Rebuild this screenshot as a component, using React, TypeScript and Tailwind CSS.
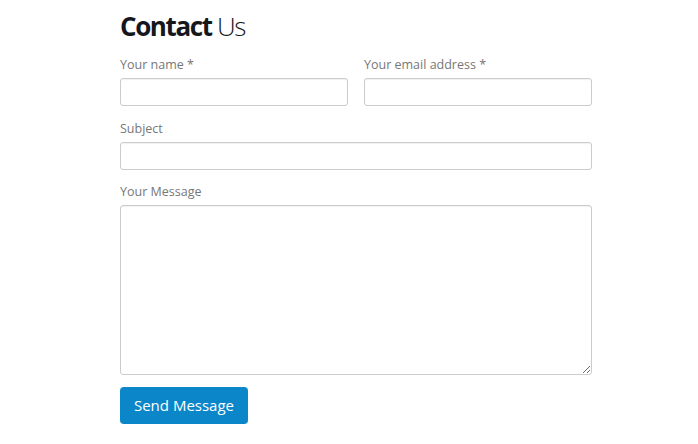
export default function App() {
  return (
    <div className="min-h-screen bg-white pl-[120px] pt-[10px] font-['Open_Sans',sans-serif]">
      <div className="w-[472px]">
        <h1 className="text-[26px] leading-[32px] text-[#15171c] tracking-[-1.4px]">
          <span className="font-bold">Contact</span> <span className="font-light">Us</span>
        </h1>

        <div className="mt-[14px] grid grid-cols-2 gap-x-[16px]">
          <div>
            <label className="block text-[12.5px] leading-[18px] text-[#777]">Your name *</label>
            <input type="text" className="mt-[4px] block h-[28px] w-full rounded-[3px] border border-[#ccc] shadow-[inset_0_1px_1px_rgba(0,0,0,0.06)] outline-none" />
          </div>
          <div>
            <label className="block text-[12.5px] leading-[18px] text-[#777]">Your email address *</label>
            <input type="email" className="mt-[4px] block h-[28px] w-full rounded-[3px] border border-[#ccc] shadow-[inset_0_1px_1px_rgba(0,0,0,0.06)] outline-none" />
          </div>
        </div>

        <div className="mt-[14px]">
          <label className="block text-[12.5px] leading-[18px] text-[#777]">Subject</label>
          <input type="text" className="mt-[4px] block h-[28px] w-full rounded-[3px] border border-[#ccc] shadow-[inset_0_1px_1px_rgba(0,0,0,0.06)] outline-none" />
        </div>

        <div className="mt-[13px]">
          <label className="block text-[12.5px] leading-[18px] text-[#777]">Your Message</label>
          <textarea className="mt-[4px] block h-[170px] w-full rounded-[3px] border border-[#ccc] shadow-[inset_0_1px_1px_rgba(0,0,0,0.06)] outline-none" />
        </div>

        <button className="mt-[12px] h-[37px] w-[128px] rounded-[4px] bg-[#0a86c9] text-[15px] text-white">
          Send Message
        </button>
      </div>
    </div>
  )
}
